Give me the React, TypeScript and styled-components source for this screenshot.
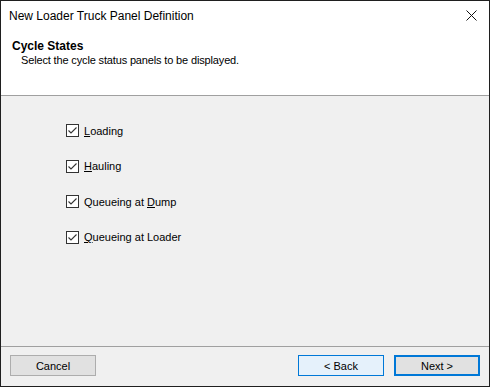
import { createGlobalStyle } from 'styled-components';
import styled from 'styled-components';

const GlobalStyle = createGlobalStyle`
    html, body {
        margin: 0;
        padding: 0;
        background: #ffffff;
    }
    body {
        font-family: "Liberation Sans", Arial, sans-serif;
        color: #000000;
    }
`;

const Window = styled.div`
    width: 490px;
    height: 387px;
    box-sizing: border-box;
    border: 1px solid #1f1f1f;
    display: flex;
    flex-direction: column;
    background: #f0f0f0;
    overflow: hidden;
`;

const TitleBar = styled.div`
    height: 29px;
    display: flex;
    align-items: center;
    justify-content: space-between;
    padding: 0 10px 0 8px;
    background: #ffffff;
    font-size: 12px;
`;

const CloseButton = styled.div`
    width: 12px;
    height: 12px;
    display: flex;
    align-items: center;
    justify-content: center;
    margin-right: 2px;
`;

const Header = styled.div`
    height: 66px;
    background: #ffffff;
    border-bottom: 1px solid #a0a0a0;
    padding: 9px 0 0 11px;
    box-sizing: border-box;
`;

const Heading = styled.div`
    font-size: 12px;
    font-weight: 700;
    line-height: 14px;
`;

const SubHeading = styled.div`
    font-size: 11px;
    line-height: 14px;
    padding-left: 9px;
    letter-spacing: -0.15px;
`;

const Body = styled.div`
    flex: 1;
    display: flex;
    flex-direction: column;
    gap: 22.67px;
    padding: 28px 0 0 65px;
`;

const Row = styled.label`
    display: flex;
    align-items: center;
    gap: 5px;
    font-size: 11px;
    height: 13px;
`;

const Box = styled.span`
    width: 13px;
    height: 13px;
    box-sizing: border-box;
    border: 1px solid #333333;
    background: #ffffff;
    display: flex;
    align-items: center;
    justify-content: center;
`;

const Key = styled.span`
    text-decoration: underline;
`;

const Footer = styled.div`
    height: 40px;
    border-top: 1px solid #a0a0a0;
    display: flex;
    align-items: flex-start;
    padding: 8px 9px 0 9px;
    box-sizing: border-box;
`;

const Spacer = styled.div`
    flex: 1;
`;

const Button = styled.div<{ $variant?: 'hover' | 'default' }>`
    width: 86px;
    height: 21px;
    box-sizing: border-box;
    display: flex;
    align-items: center;
    justify-content: center;
    font-size: 11px;
    background: ${(p) => (p.$variant === 'hover' ? '#e5f1fb' : '#e1e1e1')};
    border: ${(p) =>
        p.$variant === 'hover'
            ? '1px solid #0078d7'
            : p.$variant === 'default'
              ? '2px solid #0078d7'
              : '1px solid #adadad'};
    margin-left: ${(p) => (p.$variant === 'default' ? '10px' : '0')};
`;

const Check = () => (
    <svg width="11" height="11" viewBox="0 0 11 11">
        <path d="M1.5 5.5 L4 8 L9.5 2.5" fill="none" stroke="#333333" strokeWidth="1.1" />
    </svg>
);

const items: { before: string; key: string; after: string }[] = [
    { before: '', key: 'L', after: 'oading' },
    { before: '', key: 'H', after: 'auling' },
    { before: 'Queueing at ', key: 'D', after: 'ump' },
    { before: '', key: 'Q', after: 'ueueing at Loader' },
];

export default function App() {
    return (
        <>
            <GlobalStyle />
            <Window>
                <TitleBar>
                    <span>New Loader Truck Panel Definition</span>
                    <CloseButton>
                        <svg width="11" height="11" viewBox="0 0 11 11">
                            <path d="M0.5 0.5 L10.5 10.5 M10.5 0.5 L0.5 10.5" stroke="#111111" strokeWidth="1" />
                        </svg>
                    </CloseButton>
                </TitleBar>
                <Header>
                    <Heading>Cycle States</Heading>
                    <SubHeading>Select the cycle status panels to be displayed.</SubHeading>
                </Header>
                <Body>
                    {items.map((item) => (
                        <Row key={item.key + item.after}>
                            <Box>
                                <Check />
                            </Box>
                            <span>
                                {item.before}
                                <Key>{item.key}</Key>
                                {item.after}
                            </span>
                        </Row>
                    ))}
                </Body>
                <Footer>
                    <Button>Cancel</Button>
                    <Spacer />
                    <Button $variant="hover">&lt; Back</Button>
                    <Button $variant="default">Next &gt;</Button>
                </Footer>
            </Window>
        </>
    );
}
